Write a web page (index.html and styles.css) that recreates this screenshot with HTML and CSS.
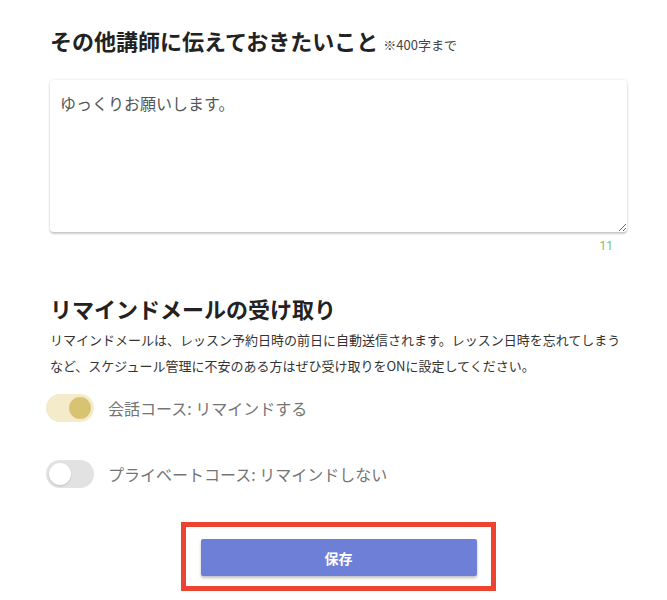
FILE: index.html
```
<!DOCTYPE html>
<html lang="ja">
<head>
<meta charset="utf-8">
<link rel="stylesheet" href="styles.css">
</head>
<body>
<main class="page">
  <section class="memo">
    <h2 class="title">その他講師に伝えておきたいこと<span class="note">※400字まで</span></h2>
    <textarea class="memo-input" readonly>ゆっくりお願いします。</textarea>
    <div class="counter">11</div>
  </section>

  <section class="remind">
    <h2 class="title">リマインドメールの受け取り</h2>
    <p class="desc">リマインドメールは、レッスン予約日時の前日に自動送信されます。レッスン日時を忘れてしまうなど、スケジュール管理に不安のある方はぜひ受け取りをONに設定してください。</p>
    <div class="toggle-row">
      <span class="switch on"><span class="knob"></span></span>
      <span class="toggle-label">会話コース: リマインドする</span>
    </div>
    <div class="toggle-row">
      <span class="switch"><span class="knob"></span></span>
      <span class="toggle-label">プライベートコース: リマインドしない</span>
    </div>
  </section>

  <div class="save-wrap">
    <div class="highlight">
      <button class="save-btn" type="button">保存</button>
    </div>
  </div>
</main>
</body>
</html>
```

FILE: styles.css
```
* { box-sizing: border-box; }
html, body { margin: 0; padding: 0; background: #fff; }
body {
  font-family: "Noto Sans CJK JP", "Noto Sans", sans-serif;
  color: #333;
}
.page {
  width: 577px;
  margin-left: 50px;
  padding-top: 24px;
}
.title {
  margin: 0;
  font-size: 22px;
  line-height: 33px;
  font-weight: 700;
  color: #222;
  letter-spacing: 0;
}
.note {
  font-size: 13px;
  font-weight: 400;
  color: #444;
  margin-left: 5px;
}
.memo-input {
  display: block;
  width: 577px;
  height: 152px;
  margin-top: 19px;
  padding: 11px 10px;
  border: none;
  border-radius: 4px;
  font-family: "Noto Sans CJK JP", "Noto Sans", sans-serif;
  font-size: 16px;
  line-height: 24px;
  color: #555;
  background: #fff;
  box-shadow: 0 2px 2px rgba(0,0,0,0.18), 0 0 3px rgba(0,0,0,0.12);
  outline: none;
  resize: vertical;
}
.counter {
  margin-top: 5px;
  padding-right: 14px;
  text-align: right;
  font-family: Roboto, "Noto Sans", sans-serif;
  font-size: 12px;
  line-height: 18px;
  color: #7cbf6e;
}
.remind { margin-top: 37px; }
.remind .title { margin-bottom: 2px; }
.desc {
  margin: 0;
  font-size: 13px;
  line-height: 26px;
  color: #333;
}
.toggle-row {
  display: flex;
  align-items: center;
  height: 40px;
  margin-left: -4px;
}
.toggle-row:first-of-type { margin-top: 9px; }
.toggle-row + .toggle-row { margin-top: 26px; }
.switch {
  position: relative;
  width: 48px;
  height: 28px;
  border-radius: 14px;
  background: #e2e2e2;
  flex: none;
}
.switch .knob {
  position: absolute;
  top: 3px;
  left: 3px;
  width: 22px;
  height: 22px;
  border-radius: 50%;
  background: #fff;
  box-shadow: 0 1px 2px rgba(0,0,0,0.15);
}
.switch.on { background: #f4ebcb; }
.switch.on .knob {
  left: 23px;
  background: #d8c372;
  box-shadow: none;
}
.toggle-label {
  margin-left: 14px;
  font-size: 16px;
  color: #757575;
}
.save-wrap {
  display: flex;
  justify-content: center;
  margin-top: 28px;
}
.highlight {
  width: 315px;
  height: 69px;
  border: 5px solid #ec4430;
  display: flex;
  justify-content: center;
  padding-top: 12px;
}
.save-btn {
  width: 276px;
  height: 37px;
  border: none;
  border-radius: 2px;
  background: #6d7fd6;
  color: #fff;
  font-family: "Noto Sans CJK JP", "Noto Sans", sans-serif;
  font-size: 14px;
  font-weight: 700;
  box-shadow: 0 2px 3px rgba(0,0,0,0.25);
  cursor: pointer;
}
```
